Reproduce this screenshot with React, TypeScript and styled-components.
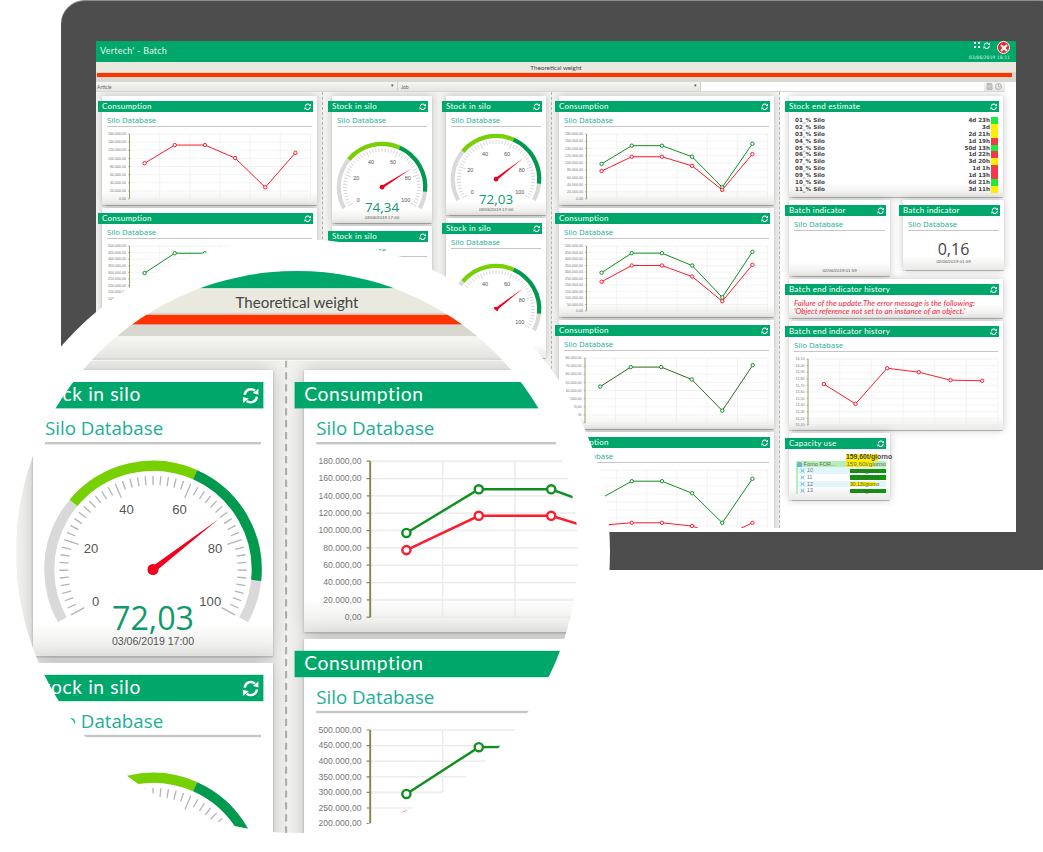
import styled, { createGlobalStyle } from "styled-components";
import { Calculator, Clock } from "lucide-react";

const GlobalStyle = createGlobalStyle`
    html, body {
        margin: 0;
        padding: 0;
        background: #fff;
    }
`;

const GREEN = "#0f8f1f";
const RED = "#ff1a2e";
const OLIVE = "#2f6b1a";

const consumption = ["180.000,00", "160.000,00", "140.000,00", "120.000,00", "100.000,00", "80.000,00", "60.000,00", "40.000,00", "20.000,00", "0,00"];
const consumptionShort = consumption.slice(1);
const consumptionBig = ["500.000,00", "450.000,00", "400.000,00", "350.000,00", "300.000,00", "250.000,00", "200.000,00", "150.000,00", "100.000,00", "50.000,00", "0,00"];
const consumptionSmall = ["80.000,00", "70.000,00", "60.000,00", "50.000,00", "40.000,00", "30.000,00", "20.000,00", "10.000,00", "0,00"];
const history = ["16,10", "16,00", "15,90", "15,80", "15,70", "15,60", "15,50", "15,40", "15,30", "15,20", "15,10"];

const stockRows = [
    ["01_% Silo", "4d 23h", "#1cec3c"],
    ["02_% Silo", "3d", "#ffee00"],
    ["03_% Silo", "2d 21h", "#ffee00"],
    ["04_% Silo", "1d 19h", "#f23a4a"],
    ["05_% Silo", "50d 13h", "#1cec3c"],
    ["06_% Silo", "1d 22h", "#f23a4a"],
    ["07_% Silo", "3d 20h", "#ffee00"],
    ["08_% Silo", "1d 1h", "#f23a4a"],
    ["09_% Silo", "1d 13h", "#f23a4a"],
    ["10_% Silo", "6d 21h", "#1cec3c"],
    ["11_% Silo", "3d 11h", "#ffee00"],
];

const capacityRows = [
    { name: "10", text: "40,45t/giorno", bar: "#0a9a0a", width: 36, tint: true },
    { name: "11", text: "45,31t/giorno", bar: "#0a9a0a", width: 36, tint: false },
    { name: "12", text: "30,13t/giorno", bar: "#ffee00", width: 26, tint: true },
    { name: "13", text: "43,41t/giorno", bar: "#0a9a0a", width: 36, tint: false },
];

function RefreshIcon() {
    return (
        <svg width="7.5" height="7.5" viewBox="0 0 16 16" fill="none" stroke="#fff" strokeWidth="2.2">
            <path d="M2.6 7.2A5.5 5.5 0 0 1 11.6 3.4" />
            <path d="M13.4 8.8A5.5 5.5 0 0 1 4.4 12.6" />
            <polygon points="15,1.5 15,7 9.8,5.6" fill="#fff" stroke="none" />
            <polygon points="1,14.5 1,9 6.2,10.4" fill="#fff" stroke="none" />
        </svg>
    );
}

interface CardProps {
    title: string;
    width: number;
    height: number;
    children?: React.ReactNode;
}

function Card({ title, width, height, children }: CardProps) {
    return (
        <CardBox $w={width} $h={height}>
            <Banner>
                <span>{title}</span>
                <RefreshIcon />
            </Banner>
            {children}
        </CardBox>
    );
}

function SiloTitle() {
    return <Heading>Silo Database</Heading>;
}

interface ChartProps {
    labels: string[];
    series: { color: string; values: number[]; shade?: string }[];
    axis?: number;
    plotW?: number;
    plotH?: number;
    width?: number;
}

function LineChart({ labels, series, axis = 27.5, plotW = 181, plotH = 65, width = 215 }: ChartProps) {
    const top = 2;
    const colW = plotW / 6;
    const rows = labels.length - 1;
    return (
        <ChartSvg width={width} height={plotH + top + 4}>
            {labels.map((label, i) => {
                const y = top + (i * plotH) / rows;
                return (
                    <g key={label}>
                        <line x1={axis} x2={axis + plotW} y1={y} y2={y} stroke={i % 4 === 0 ? "#f0f0f0" : "#e8e8e8"} strokeWidth={i % 4 === 0 ? 0.9 : 0.5} />
                        <line x1={axis - 1.5} x2={axis} y1={y} y2={y} stroke="#85854f" strokeWidth="0.5" />
                        <AxisLabel x={axis - 3.6} y={y + 1.2}>{label}</AxisLabel>
                    </g>
                );
            })}
            {[1, 2, 3, 4, 5, 6].map((col) => (
                <line key={col} x1={axis + col * colW} x2={axis + col * colW} y1={top} y2={top + plotH} stroke="#ebebeb" strokeWidth="0.6" />
            ))}
            <line x1={axis} x2={axis} y1={top} y2={top + plotH} stroke="#85854f" strokeWidth="0.8" />
            {series.map((s) => {
                const pts = s.values.map((v, i) => [axis + colW * (i + 0.5), top + plotH - (v / 100) * plotH]);
                return (
                    <g key={s.color}>
                        <polyline points={pts.map((p) => p.join(",")).join(" ")} fill="none" stroke={s.shade || s.color} strokeWidth="1" />
                        {pts.map((p, i) => (
                            <circle key={i} cx={p[0]} cy={p[1]} r="1.7" fill="#fff" stroke={s.color} strokeWidth="1" />
                        ))}
                    </g>
                );
            })}
        </ChartSvg>
    );
}

const polar = (r: number, deg: number) => {
    const a = (deg * Math.PI) / 180;
    return [r * Math.sin(a), -r * Math.cos(a)];
};

function arc(r: number, from: number, to: number) {
    const [x1, y1] = polar(r, from);
    const [x2, y2] = polar(r, to);
    return `M${x1} ${y1}A${r} ${r} 0 ${to - from > 180 ? 1 : 0} 1 ${x2} ${y2}`;
}

function Gauge({ value, text, date, top }: { value: number; text: string; date: string; top: number }) {
    const toAngle = (v: number) => -119 + 2.38 * v;
    const ticks = Array.from({ length: 51 }, (_, i) => i * 2);
    const needle = toAngle(value);
    const tip = polar(82, needle);
    const sideA = polar(3, needle + 90);
    const sideB = polar(3, needle - 90);
    return (
        <GaugeSvg $top={top} width="94" height="80" viewBox="-112 -112 224 190">
            <path d={arc(103, -119, 119)} fill="none" stroke="#d9d9d9" strokeWidth="10" />
            <path d={arc(103, -50, 24)} fill="none" stroke="#77d100" strokeWidth="10" />
            <path d={arc(103, 24, 96)} fill="none" stroke="#009a4e" strokeWidth="10" />
            {ticks.map((t) => {
                const major = t % 20 === 0;
                const [x1, y1] = polar(93, toAngle(t));
                const [x2, y2] = polar(major ? 78 : 84, toAngle(t));
                return <line key={t} x1={x1} y1={y1} x2={x2} y2={y2} stroke="#b4b4b4" strokeWidth="1.3" />;
            })}
            {[0, 20, 40, 60, 80, 100].map((t) => {
                const [x, y] = polar(65, toAngle(t));
                return <GaugeNumber key={t} x={x} y={y + 4.5}>{t}</GaugeNumber>;
            })}
            <polygon points={`${tip[0]},${tip[1]} ${sideA[0]},${sideA[1]} ${sideB[0]},${sideB[1]}`} fill="#f0001c" />
            <circle r="5.5" fill="#f0001c" />
            <GaugeValue x="0" y="60">{text}</GaugeValue>
            <GaugeDate x="0" y="75">{date}</GaugeDate>
        </GaugeSvg>
    );
}

function Dashboard() {
    return (
        <Screen>
            <TitleBar>
                <AppName>Vertech' - Batch</AppName>
                <TitleTools>
                    <ToolRow>
                        <svg width="6" height="6" viewBox="0 0 6 6" fill="#fff">
                            <rect x="0" y="0" width="2" height="2" />
                            <rect x="4" y="0" width="2" height="2" />
                            <rect x="0" y="4" width="2" height="2" />
                            <rect x="4" y="4" width="2" height="2" />
                        </svg>
                        <RefreshIcon />
                        <CloseButton>
                            <svg width="8" height="8" viewBox="0 0 8 8" stroke="#fff" strokeWidth="2.2">
                                <line x1="1" y1="1" x2="7" y2="7" />
                                <line x1="7" y1="1" x2="1" y2="7" />
                            </svg>
                        </CloseButton>
                    </ToolRow>
                    <ClockText>03/06/2019 18:11</ClockText>
                </TitleTools>
            </TitleBar>
            <SubTitle>Theoretical weight</SubTitle>
            <AlertBand>
                <AlertBar />
            </AlertBand>
            <FilterRow>
                <Select $w={302}>
                    <span>Article</span>
                    <Caret>▾</Caret>
                </Select>
                <Select $w={303}>
                    <span>Job</span>
                    <Caret>▾</Caret>
                </Select>
                <FilterInput />
                <FilterIcons>
                    <Calculator size={7} />
                    <Clock size={7} />
                </FilterIcons>
            </FilterRow>
            <Body>
                <Column $w={227} $pad={6} $line>
                    <Card title="Consumption" width={215} height={109}>
                        <SiloTitle />
                        <LineChart labels={consumptionShort} series={[{ color: RED, values: [55, 83, 83, 63, 18, 71] }]} />
                    </Card>
                    <Card title="Consumption" width={215} height={160}>
                        <SiloTitle />
                        <LineChart plotH={66} labels={consumptionBig} series={[{ color: GREEN, values: [59, 89, 89, 70, 21, 91] }]} />
                    </Card>
                </Column>
                <Column $w={116} $pad={9}>
                    <Card title="Stock in silo" width={100} height={127}>
                        <SiloTitle />
                        <Gauge value={74.34} text="74,34" date="03/06/2019 17:00" top={13} />
                    </Card>
                    <Card title="Stock in silo" width={100} height={120}>
                        <SiloTitle />
                    </Card>
                </Column>
                <Column $w={113} $pad={7} $line>
                    <Card title="Stock in silo" width={100} height={119}>
                        <SiloTitle />
                        <Gauge value={72.03} text="72,03" date="03/06/2019 17:00" top={5.5} />
                    </Card>
                    <Card title="Stock in silo" width={100} height={140}>
                        <SiloTitle />
                        <Gauge value={72.03} text="72,03" date="03/06/2019 17:00" top={13} />
                    </Card>
                </Column>
                <Column $w={228} $pad={7} $line>
                    <Card title="Consumption" width={215} height={109}>
                        <SiloTitle />
                        <LineChart
                            labels={consumption}
                            series={[
                                { color: GREEN, values: [54, 82, 82, 65, 18, 85] },
                                { color: RED, values: [43, 65, 65, 51, 14, 69] },
                            ]}
                        />
                    </Card>
                    <Card title="Consumption" width={215} height={109}>
                        <SiloTitle />
                        <LineChart
                            labels={consumptionBig}
                            series={[
                                { color: GREEN, values: [59, 89, 89, 70, 21, 91] },
                                { color: RED, values: [45, 70, 70, 53, 15, 71] },
                            ]}
                        />
                    </Card>
                    <Card title="Consumption" width={215} height={109}>
                        <SiloTitle />
                        <LineChart
                            axis={26}
                            plotW={183}
                            labels={consumptionSmall}
                            series={[{ color: GREEN, shade: OLIVE, values: [56, 86, 86, 67, 19, 89] }]}
                        />
                    </Card>
                    <Card title="Consumption" width={215} height={130}>
                        <SiloTitle />
                        <LineChart
                            plotH={80}
                            labels={consumptionBig}
                            series={[
                                { color: GREEN, values: [65, 86, 86, 71, 34, 89] },
                                { color: RED, values: [31, 34, 34, 30, 16, 34] },
                            ]}
                        />
                    </Card>
                </Column>
                <Column $w={226} $pad={9} $plain>
                    <Card title="Stock end estimate" width={214} height={101}>
                        <StockList>
                            {stockRows.map(([name, time, color]) => (
                                <StockRow key={name}>
                                    <span>{name}</span>
                                    <StockTime>{time}</StockTime>
                                    <StockLevel $color={color} />
                                </StockRow>
                            ))}
                        </StockList>
                    </Card>
                    <CardRow>
                        <Card title="Batch indicator" width={101} height={76}>
                            <SiloTitle />
                            <IndicatorBody $pad={37}>
                                <IndicatorDate>02/06/2019 01:59</IndicatorDate>
                            </IndicatorBody>
                        </Card>
                        <Card title="Batch indicator" width={101} height={70}>
                            <SiloTitle />
                            <IndicatorBody $pad={8}>
                                <IndicatorValue>0,16</IndicatorValue>
                                <IndicatorDate>02/06/2019 01:59</IndicatorDate>
                            </IndicatorBody>
                        </Card>
                    </CardRow>
                    <Card title="Batch end indicator history" width={214} height={39}>
                        <ErrorText>
                            Failure of the update.The error message is the following:
                            <br />
                            'Object reference not set to an instance of an object.'
                        </ErrorText>
                    </Card>
                    <Card title="Batch end indicator history" width={214} height={109}>
                        <SiloTitle />
                        <LineChart
                            axis={19}
                            plotW={190}
                            plotH={66}
                            width={214}
                            labels={history}
                            series={[{ color: RED, values: [62, 32, 86, 80, 68, 67] }]}
                        />
                    </Card>
                    <Card title="Capacity use" width={101} height={67}>
                        <Tree>
                            <TreeRoot>
                                <svg width="7" height="6" viewBox="0 0 7 6" fill="#1d7fc4">
                                    <path d="M0 0h2v2h1v-1h1v1h3v4H0z" />
                                </svg>
                                <RootValue>159,60t/giorno</RootValue>
                            </TreeRoot>
                            <TreeBranch>
                                <BranchIcon />
                                <BranchName>Forno FOR...</BranchName>
                                <BranchValue>159,60t/giorno</BranchValue>
                            </TreeBranch>
                            {capacityRows.map((row) => (
                                <TreeLeaf key={row.name} $tint={row.tint}>
                                    <LeafIcon />
                                    <LeafName>{row.name}</LeafName>
                                    <LeafBar $color={row.bar} $width={row.width}>{row.text}</LeafBar>
                                </TreeLeaf>
                            ))}
                        </Tree>
                    </Card>
                </Column>
            </Body>
        </Screen>
    );
}

function App() {
    return (
        <Page>
            <GlobalStyle />
            <Monitor>
                <Dashboard />
            </Monitor>
            <LensRing>
                <LensWindow>
                    <Zoomed>
                        <Dashboard />
                    </Zoomed>
                </LensWindow>
            </LensRing>
        </Page>
    );
}

export default App;

const Page = styled.div`
    position: relative;
    width: 1043px;
    height: 852px;
    overflow: hidden;
    background: #fff;
    font-family: "Lato", "Liberation Sans", sans-serif;
`;

const Monitor = styled.div`
    box-sizing: border-box;
    margin-left: 61px;
    width: 1002px;
    height: 570px;
    padding: 40px 47px 38px 35px;
    background: #4d4d4d;
    border-top: 1px solid #8c8c8c;
    border-radius: 24px;
`;

const LensRing = styled.div`
    position: absolute;
    left: -16px;
    top: 239px;
    width: 626px;
    height: 626px;
    border-radius: 50%;
    background: #fff;
    display: flex;
    align-items: center;
    justify-content: center;
`;

const LensWindow = styled.div`
    position: relative;
    width: 562px;
    height: 562px;
    border-radius: 50%;
    overflow: hidden;
    background: #fff;
`;

const Zoomed = styled.div`
    position: absolute;
    left: -822.6px;
    top: -32.6px;
    width: 920px;
    transform: scale(2.4);
    transform-origin: 0 0;
`;

const Screen = styled.div`
    width: 920px;
    height: 491px;
    background: #fff;
    overflow: hidden;
`;

const TitleBar = styled.div`
    height: 21px;
    background: #00a76a;
    display: flex;
    justify-content: space-between;
    padding: 0 6px 0 4px;
`;

const AppName = styled.div`
    color: #e6f7ef;
    font-size: 9px;
    line-height: 19px;
    letter-spacing: 0.25px;
`;

const TitleTools = styled.div`
    display: flex;
    flex-direction: column;
    align-items: flex-end;
`;

const ToolRow = styled.div`
    display: flex;
    align-items: flex-start;
    gap: 3px;
    height: 14px;
    svg {
        margin-top: 1px;
    }
`;

const CloseButton = styled.div`
    width: 13px;
    height: 13px;
    box-sizing: border-box;
    margin-left: 4px;
    border-radius: 50%;
    border: 1px solid #fff;
    background: #e8262c;
    display: flex;
    align-items: center;
    justify-content: center;
    svg {
        margin-top: 0;
    }
`;

const ClockText = styled.div`
    color: #d8f0e4;
    font-family: "DejaVu Sans", sans-serif;
    font-size: 4.6px;
    line-height: 6px;
`;

const SubTitle = styled.div`
    height: 10px;
    background: #e9e9df;
    color: #444;
    font-size: 6.3px;
    line-height: 12px;
    text-align: center;
`;

const AlertBand = styled.div`
    height: 10px;
    background: #d8d8d0;
    padding: 1px 4px 0 1px;
    box-sizing: border-box;
`;

const AlertBar = styled.div`
    height: 4px;
    background: #ff3300;
`;

const FilterRow = styled.div`
    display: flex;
    height: 10px;
    width: 909px;
    background: linear-gradient(#f6f6f4, #e4e4e0);
    border-bottom: 1px solid #d8d8d4;
    box-sizing: border-box;
    color: #666;
    font-size: 5px;
    line-height: 10px;
`;

const Select = styled.div<{ $w: number }>`
    width: ${(p) => p.$w}px;
    box-sizing: border-box;
    padding: 0 3px 0 1px;
    display: flex;
    justify-content: space-between;
    border-right: 1px solid #d0d0cc;
    &:nth-child(2) {
        padding-left: 3px;
    }
`;

const Caret = styled.span`
    font-size: 5px;
    line-height: 7px;
    color: #555;
`;

const FilterInput = styled.div`
    flex: 1;
    background: #fff;
`;

const FilterIcons = styled.div`
    width: 19px;
    display: flex;
    align-items: center;
    gap: 2px;
    padding-left: 2px;
    color: #888;
`;

const Body = styled.div`
    display: flex;
    height: 436px;
    overflow: hidden;
    background: #fff;
`;

const Column = styled.div<{ $w: number; $pad: number; $line?: boolean; $plain?: boolean }>`
    box-sizing: border-box;
    width: ${(p) => p.$w}px;
    padding: 4px 0 0 ${(p) => p.$pad}px;
    display: flex;
    flex-direction: column;
    gap: 3px;
    background: ${(p) => (p.$plain ? "#fff" : "#f3f3f1")};
    border-right: ${(p) => (p.$line ? "1px dashed #b4b4b4" : "none")};
`;

const CardRow = styled.div`
    display: flex;
    align-items: flex-start;
    gap: 13px;
`;

const CardBox = styled.div<{ $w: number; $h: number }>`
    flex: none;
    box-sizing: border-box;
    width: ${(p) => p.$w}px;
    height: ${(p) => p.$h}px;
    padding-top: 4.5px;
    background: linear-gradient(#fff calc(100% - 14px), #e9e9e7);
    box-shadow: 0 0.5px 1px rgba(0, 0, 0, 0.25), 0 0 8px rgba(0, 0, 0, 0.22);
`;

const Banner = styled.div`
    box-sizing: border-box;
    margin: 0 4px 0 -4px;
    height: 11.5px;
    padding: 0 2px 0 4px;
    background: #00a76a;
    color: #fff;
    display: flex;
    align-items: center;
    justify-content: space-between;
    font-size: 8px;
    letter-spacing: 0.25px;
`;

const Heading = styled.div`
    margin: 0 5px;
    padding-top: 2.5px;
    height: 11px;
    border-bottom: 0.6px solid #c6c6c6;
    color: #1cae96;
    font-family: "Open Sans", sans-serif;
    font-size: 7.8px;
    line-height: 10px;
`;

const ChartSvg = styled.svg`
    display: block;
    margin-top: 5.6px;
`;

const AxisLabel = styled.text`
    font-family: "Liberation Sans", sans-serif;
    font-size: 3.6px;
    fill: #777;
    text-anchor: end;
`;

const GaugeSvg = styled.svg<{ $top: number }>`
    display: block;
    margin: ${(p) => p.$top}px auto 0;
`;

const GaugeNumber = styled.text`
    font-family: "Liberation Sans", sans-serif;
    font-size: 13px;
    fill: #555;
    text-anchor: middle;
`;

const GaugeValue = styled.text`
    font-family: "Open Sans", sans-serif;
    font-size: 32px;
    fill: #0e9a6c;
    text-anchor: middle;
`;

const GaugeDate = styled.text`
    font-family: "Liberation Sans", sans-serif;
    font-size: 10.5px;
    fill: #555;
    text-anchor: middle;
`;

const StockList = styled.div`
    padding: 5px 5px 0 6px;
`;

const StockRow = styled.div`
    display: flex;
    height: 6.9px;
    font-family: "DejaVu Sans", sans-serif;
    font-weight: 700;
    font-size: 5.6px;
    line-height: 6.9px;
    color: #444;
`;

const StockTime = styled.span`
    margin-left: auto;
    margin-right: 1px;
`;

const StockLevel = styled.span<{ $color: string }>`
    width: 7px;
    background: ${(p) => p.$color};
`;

const IndicatorBody = styled.div<{ $pad: number }>`
    padding-top: ${(p) => p.$pad}px;
    text-align: center;
`;

const IndicatorValue = styled.div`
    font-family: "Open Sans", sans-serif;
    font-size: 16px;
    line-height: 20px;
    color: #444;
`;

const IndicatorDate = styled.div`
    font-family: "Liberation Sans", sans-serif;
    font-size: 4.4px;
    line-height: 6px;
    color: #555;
`;

const ErrorText = styled.div`
    padding: 3.5px 5px 0;
    color: #f5263c;
    font-style: italic;
    font-size: 7.9px;
    line-height: 8px;
    white-space: nowrap;
`;

const Tree = styled.div`
    padding: 5px 0 0 5px;
    font-family: "Liberation Sans", sans-serif;
    font-size: 5.4px;
    line-height: 6.7px;
    white-space: nowrap;
`;

const TreeRoot = styled.div`
    display: flex;
    align-items: center;
    height: 6.7px;
`;

const RootValue = styled.span`
    margin-left: 52px;
    font-size: 6.8px;
    font-weight: 700;
    color: #444;
    background: linear-gradient(90deg, #ffee00 70%, transparent 70%);
`;

const TreeBranch = styled.div`
    display: flex;
    align-items: center;
    height: 6.7px;
    width: 90px;
    margin-left: 2px;
    background: #b5efb5;
`;

const BranchIcon = styled.span`
    width: 5px;
    height: 5px;
    margin-left: 1px;
    border-radius: 2px 2px 0 0;
    background: #6ab3e0;
`;

const BranchName = styled.span`
    margin-left: 2px;
    width: 44px;
    color: #666;
`;

const BranchValue = styled.span`
    font-size: 6.2px;
    color: #666;
    background: linear-gradient(90deg, #ffee00 70%, transparent 70%);
`;

const TreeLeaf = styled.div<{ $tint: boolean }>`
    display: flex;
    align-items: center;
    height: 6.7px;
    width: 90px;
    margin-left: 2px;
    box-sizing: border-box;
    border-left: 2px solid #b5efb5;
    background: ${(p) => (p.$tint ? "#e2f5fa" : "transparent")};
`;

const LeafIcon = styled.span`
    width: 5px;
    height: 5px;
    margin-left: 2px;
    background: #79c3ee;
    clip-path: polygon(0 0, 50% 35%, 100% 0, 70% 50%, 100% 100%, 50% 65%, 0 100%, 30% 50%);
`;

const LeafName = styled.span`
    margin-left: 2px;
    width: 43px;
    color: #777;
`;

const LeafBar = styled.span<{ $color: string; $width: number }>`
    width: ${(p) => p.$width}px;
    height: 4.4px;
    line-height: 4.4px;
    background: ${(p) => p.$color};
    color: #4d5a3f;
    font-size: 5px;
`;
